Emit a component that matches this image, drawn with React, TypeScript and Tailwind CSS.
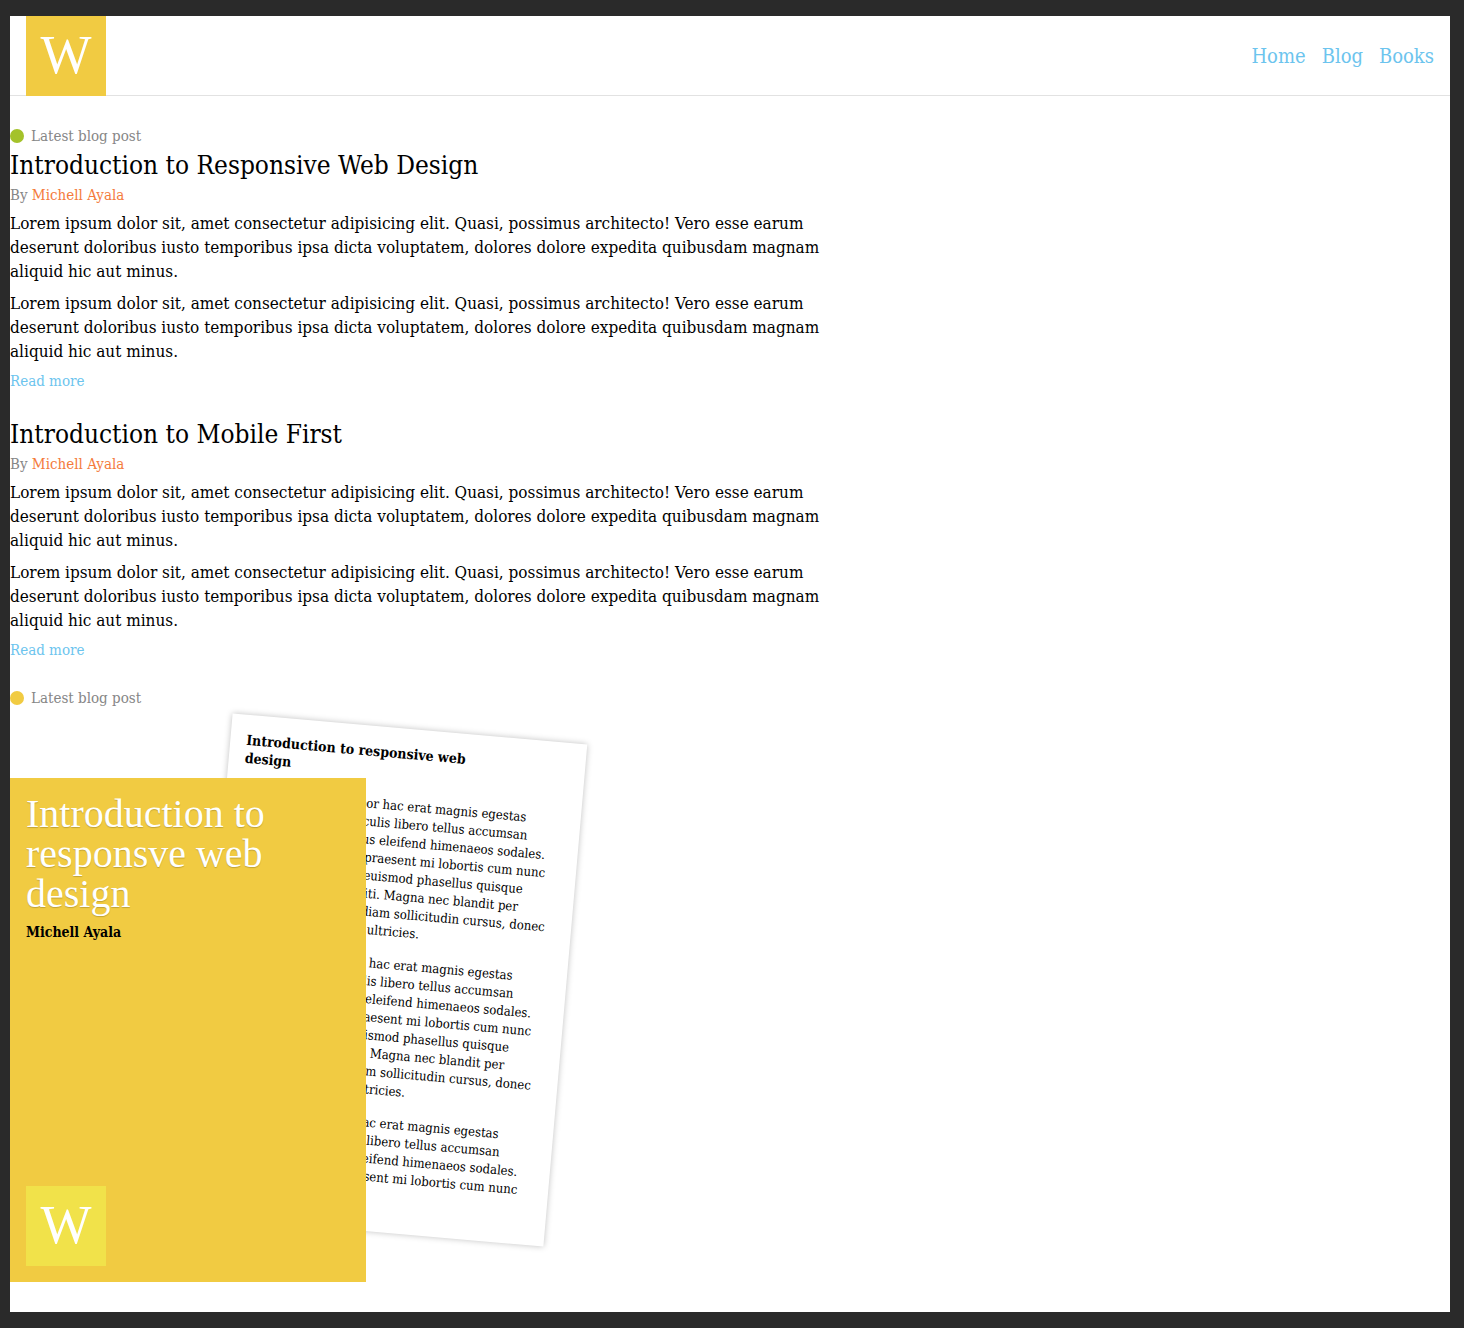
const bodyFont = 'font-["DejaVu_Serif_Condensed","DejaVu_Serif",serif]';
const displayFont = 'font-["Liberation_Serif",serif]';

const lorem =
  'Lorem ipsum dolor sit, amet consectetur adipisicing elit. Quasi, possimus architecto! Vero esse earum deserunt doloribus iusto temporibus ipsa dicta voluptatem, dolores dolore expedita quibusdam magnam aliquid hic aut minus.';

const pageLines = [
  'Lorem nibh elit tempor hac erat magnis egestas',
  'lectus, vitae ligula iaculis libero tellus accumsan',
  'fames, nullam faucibus eleifend himenaeos sodales.',
  'Sociis integer sapien praesent mi lobortis cum nunc',
  'montes, turpis mollis euismod phasellus quisque',
  'sem mauris varius taciti. Magna nec blandit per',
  'luctus montes sapien diam sollicitudin cursus, donec',
  'felis porta varius risus ultricies.',
];

function Logo({ light = false }: { light?: boolean }) {
  return (
    <div
      className={`flex size-20 shrink-0 items-center justify-center pb-0.5 text-[54px] leading-none text-white ${displayFont} ${
        light ? 'bg-[#f1e24a]' : 'bg-[#f1cb42]'
      }`}
    >
      W
    </div>
  );
}

function Label({ dot }: { dot: string }) {
  return (
    <div className="flex items-center gap-[7px] text-[15px] leading-5 text-[#868686]">
      <span className={`size-3.5 rounded-full ${dot}`} />
      Latest blog post
    </div>
  );
}

function Post({ title }: { title: string }) {
  return (
    <article className="max-w-[830px]">
      <h2 className="text-[26px] leading-8">{title}</h2>
      <p className="mt-1 text-[15px] leading-5 text-[#868686]">
        By{' '}
        <a href="#author" className="text-[#f47b3c]">
          Michell Ayala
        </a>
      </p>
      <p className="mt-1.5 text-[17px] leading-6">{lorem}</p>
      <p className="mt-2 text-[17px] leading-6">{lorem}</p>
      <a href="#post" className="mt-2 block text-[15px] leading-5 text-[#6cc4ee]">
        Read more
      </a>
    </article>
  );
}

function Book() {
  return (
    <div className="relative mt-[70px] h-[504px] w-[356px]">
      <div className="absolute top-[-50px] left-[200px] size-full rotate-5 overflow-hidden bg-white p-4 shadow-[0_0_6px_rgba(0,0,0,0.25)]">
        <h3 className="max-w-[240px] text-[14px] leading-[18px] font-bold">Introduction to responsive web design</h3>
        <div className="mt-[17px] flex flex-col gap-[15px] text-[13px] leading-[18px] whitespace-nowrap">
          {[8, 8, 4].map((count, i) => (
            <p key={i}>
              {pageLines.slice(0, count).map((line) => (
                <span key={line} className="block">
                  {line}
                </span>
              ))}
            </p>
          ))}
        </div>
      </div>
      <div className="relative flex size-full flex-col bg-[#f1cb42] p-4">
        <h2
          className={`max-w-[260px] text-[40px] leading-10 text-white [text-shadow:0_1px_1px_rgba(0,0,0,0.2)] ${displayFont}`}
        >
          Introduction to responsve web design
        </h2>
        <p className="mt-2 mb-auto text-[14px] leading-5 font-bold">Michell Ayala</p>
        <Logo light />
      </div>
    </div>
  );
}

export default function App() {
  return (
    <div className={`min-h-screen bg-[#2a2a2a] py-4 pr-3.5 pl-2.5 text-black ${bodyFont}`}>
      <div className="bg-white pb-[30px]">
        <header className="flex h-20 items-center justify-between px-4 shadow-[inset_0_-1px_0_#e2e2e2]">
          <Logo />
          <nav className="flex gap-4 text-[20px] leading-6 text-[#6cc4ee]">
            <a href="#home">Home</a>
            <a href="#blog">Blog</a>
            <a href="#books">Books</a>
          </nav>
        </header>
        <main className="pt-[30px]">
          <Label dot="bg-[#a4c22a]" />
          <div className="mt-[3px] flex flex-col gap-[27px]">
            <Post title="Introduction to Responsive Web Design" />
            <Post title="Introduction to Mobile First" />
          </div>
          <div className="mt-7">
            <Label dot="bg-[#f1cb42]" />
          </div>
          <Book />
        </main>
      </div>
    </div>
  );
}
